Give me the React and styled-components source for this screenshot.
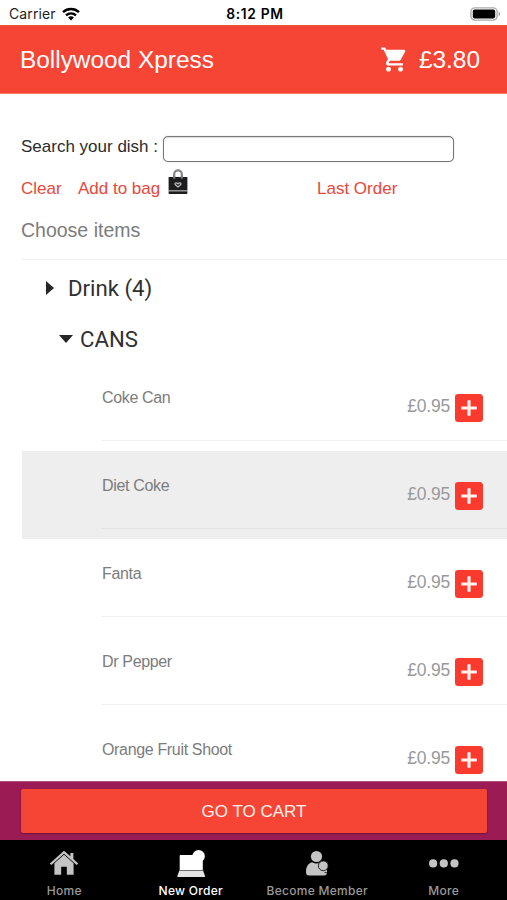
import React from "react"
import styled, { createGlobalStyle } from "styled-components"

const GlobalStyle = createGlobalStyle`
    * {
        box-sizing: border-box;
    }
    body {
        margin: 0;
        background: #fff;
        font-family: "Liberation Sans", Arial, sans-serif;
    }
`

const Screen = styled.div`
    display: flex;
    flex-direction: column;
    width: 507px;
    height: 900px;
    overflow: hidden;
    background: #fff;
`

const StatusBar = styled.div`
    flex: none;
    display: grid;
    grid-template-columns: 1fr auto 1fr;
    align-items: center;
    height: 25px;
    padding: 2px 6px 0 9px;
    font-family: Inter, sans-serif;
    font-size: 14px;
    color: #222;
    svg {
        display: block;
    }
`

const Carrier = styled.div`
    display: flex;
    align-items: center;
    gap: 6px;
    letter-spacing: .1px;
`

const Clock = styled.div`
    font-size: 13.8px;
    font-weight: 600;
    letter-spacing: .65px;
    color: #000;
`

const Battery = styled.div`
    display: flex;
    justify-content: flex-end;
`

const Header = styled.header`
    flex: none;
    display: flex;
    align-items: center;
    justify-content: space-between;
    height: 69px;
    padding: 0 27px 0 20px;
    background: #f64435;
    border-top: 1px solid #e8503f;
    border-bottom: 1px solid #fa7a6e;
    color: #fff;
    font-size: 24.4px;
    line-height: 28px;
`

const CartTotal = styled.div`
    display: flex;
    align-items: center;
    gap: 10px;
`

const Content = styled.main`
    flex: 1;
    min-height: 0;
    overflow: hidden;
    padding: 41px 0 0 21px;
`

const SearchRow = styled.label`
    display: flex;
    align-items: center;
    height: 27px;
    font-size: 17px;
    color: #2b2b2b;
    span {
        width: 142px;
        padding-bottom: 3px;
        white-space: nowrap;
    }
`

const SearchInput = styled.input`
    width: 291px;
    height: 26px;
    padding: 0 6px;
    border: 1.5px solid #777;
    border-radius: 5px;
    outline: none;
    background: #fff;
    box-shadow: inset 0 1px 1px #ddd, 0 0 1px #999;
`

const Actions = styled.div`
    display: flex;
    align-items: center;
    height: 53px;
    color: #e8483c;
    font-size: 17px;
    line-height: 20px;
`

const Action = styled.a`
    width: ${props => props.width}px;
    white-space: nowrap;
`

const BagIcon = styled.svg`
    width: 20px;
    height: 27px;
    margin: 0 129px 14px 0;
`

const Subheader = styled.div`
    height: 45px;
    padding-top: 3px;
    border-bottom: 1px solid #f1f1f1;
    font-size: 19.5px;
    line-height: 24px;
    color: #7c7c7c;
`

const Category = styled.div`
    display: flex;
    align-items: center;
    gap: ${props => (props.open ? 7 : 14)}px;
    height: 51px;
    padding: 4px 0 0 ${props => (props.open ? 38 : 25)}px;
    font-family: Roboto, sans-serif;
    font-size: 22.2px;
    line-height: 26px;
    color: #303030;
`

const Arrow = styled.svg`
    width: ${props => (props.open ? 14 : 8)}px;
    height: ${props => (props.open ? 8 : 14)}px;
    fill: #262626;
`

const List = styled.ul`
    margin: 0;
    padding: 1px 0 0;
    list-style: none;
`

const Item = styled.li`
    height: 88px;
    margin-left: 1px;
    padding-left: 80px;
    background: ${props => (props.active ? "#eeeeee" : "#fff")};
`

const ItemBody = styled.div`
    display: flex;
    justify-content: space-between;
    height: 78px;
    padding-right: 24px;
    border-bottom: 1px solid ${props => (props.active ? "#e2e2e2" : "#f0f0f0")};
`

const ItemName = styled.span`
    padding-top: 26px;
    font-size: 16px;
    line-height: 18px;
    letter-spacing: -0.34px;
    color: #7c7c7c;
`

const Price = styled.div`
    display: flex;
    gap: 5px;
    padding-top: 31px;
    font-size: 17.5px;
    line-height: 24px;
    letter-spacing: -0.2px;
    color: #999;
    svg {
        width: 28px;
        height: 28px;
    }
`

const Footer = styled.div`
    flex: none;
    height: 59px;
    padding: 7px 20px 7px 21px;
    background: #9b1c54;
    border-top: 1px solid #ae5080;
`

const CartButton = styled.button`
    display: block;
    width: 100%;
    height: 44px;
    padding: 1px 0 0;
    border: 0;
    border-radius: 2px;
    background: #f64435;
    box-shadow: 0 1px 2px rgba(70, 0, 20, .5);
    color: #fff1ee;
    font-family: inherit;
    font-size: 17px;
`

const TabBar = styled.nav`
    flex: none;
    display: grid;
    grid-template-columns: repeat(4, 126.5px);
    height: 60px;
    background: #000;
`

const Tab = styled.div`
    display: flex;
    flex-direction: column;
    align-items: center;
    padding: 8px 0 0 2px;
    font-family: Inter, sans-serif;
    font-size: 12px;
    font-weight: 500;
    line-height: 16px;
    letter-spacing: .28px;
    white-space: nowrap;
    color: ${props => (props.active ? "#fff" : "#999")};
    svg {
        width: 32px;
        height: 30px;
        margin-bottom: 5px;
    }
`

const items = [
    { name: "Coke Can", price: "£0.95" },
    { name: "Diet Coke", price: "£0.95", active: true },
    { name: "Fanta", price: "£0.95" },
    { name: "Dr Pepper", price: "£0.95" },
    { name: "Orange Fruit Shoot", price: "£0.95" },
]

const WifiIcon = () => (
    <svg width="18" height="14" viewBox="0 0 18 14" fill="none" stroke="#000" strokeWidth="2.5">
        <path d="M1 5.1C5.6.9 12.4.9 17 5.1" />
        <path d="M4 8.4c2.9-2.6 7.1-2.6 10 0" />
        <path d="M9 13.6 6.1 10.6a4.3 4.3 0 0 1 5.8 0z" fill="#000" stroke="none" />
    </svg>
)

const BatteryIcon = () => (
    <svg width="31" height="14" viewBox="0 0 31 14">
        <rect x=".9" y=".9" width="26.2" height="12.2" rx="4" fill="#fff" stroke="#aaa" strokeWidth="1.4" />
        <rect x="2.8" y="2.6" width="22.4" height="8.8" rx="1.8" fill="#000" />
        <path d="M28.7 4.8c2 .8 2 3.6 0 4.4z" fill="#999" />
    </svg>
)

const CartIcon = () => (
    <svg width="29" height="29" viewBox="0 0 24 24" fill="#fff">
        <path d="M7 18c-1.1 0-1.99.9-1.99 2S5.9 22 7 22s2-.9 2-2-.9-2-2-2zM1 2v2h2l3.6 7.59-1.35 2.45c-.16.28-.25.61-.25.96 0 1.1.9 2 2 2h12v-2H7.42c-.14 0-.25-.11-.25-.25l.03-.12.9-1.63h7.45c.75 0 1.41-.41 1.75-1.03l3.58-6.49A1.003 1.003 0 0 0 20 4H5.21l-.94-2H1zm16 16c-1.1 0-1.99.9-1.99 2s.89 2 1.99 2 2-.9 2-2-.9-2-2-2z" />
    </svg>
)

const AddIcon = () => (
    <svg viewBox="3 3 18 18">
        <path fill="#f93a2f" d="M19 3H5a2 2 0 0 0-2 2v14c0 1.1.9 2 2 2h14c1.1 0 2-.9 2-2V5c0-1.1-.9-2-2-2z" />
        <path fill="#fff3f0" d="M17 13h-4v4h-2v-4H7v-2h4V7h2v4h4z" />
    </svg>
)

const Bag = () => (
    <BagIcon viewBox="0 0 20 27">
        <path d="M6.2 10V6.2a3.8 3.8 0 0 1 7.6 0V10" fill="none" stroke="#858585" strokeWidth="2.2" />
        <path d="M.6 9h18.8v13.4H.6z" fill="#1d1d1f" />
        <path d="M.6 23.2h18.8v2q0 .7-.7.7H1.3q-.7 0-.7-.7z" fill="#1d1d1f" />
        <path d="M.6 22.7h18.8" stroke="#888" strokeWidth=".8" />
        <path d="M6.2 8.6v2.2M13.8 8.6v2.2" stroke="#777" strokeWidth="2.2" />
        <path d="m10 19-2.8-2.5c-1-1.3.8-2.6 2.8-.7 2-1.9 3.8-.6 2.8.7z" fill="none" stroke="#bbb" strokeWidth="1.2" />
    </BagIcon>
)

const HomeIcon = () => (
    <svg viewBox="0 0 32 30" fill="#c4c4c4">
        <path d="M16 2.8 1.8 15.4l1.6 1.6L16 5.8 28.6 17l1.6-1.6-4.8-4.3V5h-3v3.3z" />
        <path d="M16 6.8 6.4 15.3V26.8h6.8v-8h5.6v8h6.8V15.3z" />
    </svg>
)

const OrderIcon = () => (
    <svg viewBox="0 0 32 30" fill="#fff">
        <path d="M5.5 7h16v-.5h6.3V22H4.7V7.8q0-.8.8-.8z" />
        <circle cx="23.6" cy="8.2" r="6.2" />
        <path d="M4.2 23h24l1.8 4.8q.4 1.2-.8 1.2H3.2q-1.2 0-.8-1.2z" fill="#e4e4e4" />
        <path d="M4 22.5h24.5" stroke="#888" strokeWidth=".8" />
    </svg>
)

const MemberIcon = () => (
    <svg viewBox="0 0 32 30" fill="#c4c4c4">
        <circle cx="15.5" cy="8.5" r="5.6" />
        <path d="M5 24C5 18 8 14.8 11.3 14.2q4.2 2.4 8.4 0c4 .6 6.3 3.8 6.3 9.8q0 3.5-3 3.5H8q-3 0-3-3.5z" />
        <circle cx="22.3" cy="17.8" r="4.9" stroke="#111" strokeWidth=".9" />
        <path d="M23.5 24.6h3" stroke="#111" strokeWidth=".8" />
    </svg>
)

const MoreIcon = () => (
    <svg viewBox="0 0 32 30" fill="#c4c4c4">
        <circle cx="5.1" cy="15.4" r="4.1" />
        <circle cx="15.8" cy="15.4" r="4.1" />
        <circle cx="26.5" cy="15.4" r="4.1" />
    </svg>
)

const App = () => {
    return (
        <>
            <GlobalStyle />
            <Screen>
                <StatusBar>
                    <Carrier>Carrier <WifiIcon /></Carrier>
                    <Clock>8:12 PM</Clock>
                    <Battery><BatteryIcon /></Battery>
                </StatusBar>
                <Header>
                    <span>Bollywood Xpress</span>
                    <CartTotal><CartIcon />£3.80</CartTotal>
                </Header>
                <Content>
                    <SearchRow>
                        <span>Search your dish :</span>
                        <SearchInput type="text" />
                    </SearchRow>
                    <Actions>
                        <Action width={57}>Clear</Action>
                        <Action width={90}>Add to bag</Action>
                        <Bag />
                        <Action width={90}>Last Order</Action>
                    </Actions>
                    <Subheader>Choose items</Subheader>
                    <Category>
                        <Arrow viewBox="0 0 8 14"><path d="M0 0l8 7-8 7z" /></Arrow>
                        Drink (4)
                    </Category>
                    <Category open>
                        <Arrow open viewBox="0 0 14 8"><path d="M0 0h14L7 8z" /></Arrow>
                        CANS
                    </Category>
                    <List>
                        {items.map(item =>
                            <Item key={item.name} active={item.active}>
                                <ItemBody active={item.active}>
                                    <ItemName>{item.name}</ItemName>
                                    <Price>{item.price}<AddIcon /></Price>
                                </ItemBody>
                            </Item>)}
                    </List>
                </Content>
                <Footer>
                    <CartButton>GO TO CART</CartButton>
                </Footer>
                <TabBar>
                    <Tab><HomeIcon />Home</Tab>
                    <Tab active><OrderIcon />New Order</Tab>
                    <Tab><MemberIcon />Become Member</Tab>
                    <Tab><MoreIcon />More</Tab>
                </TabBar>
            </Screen>
        </>
    )
}

export default App
